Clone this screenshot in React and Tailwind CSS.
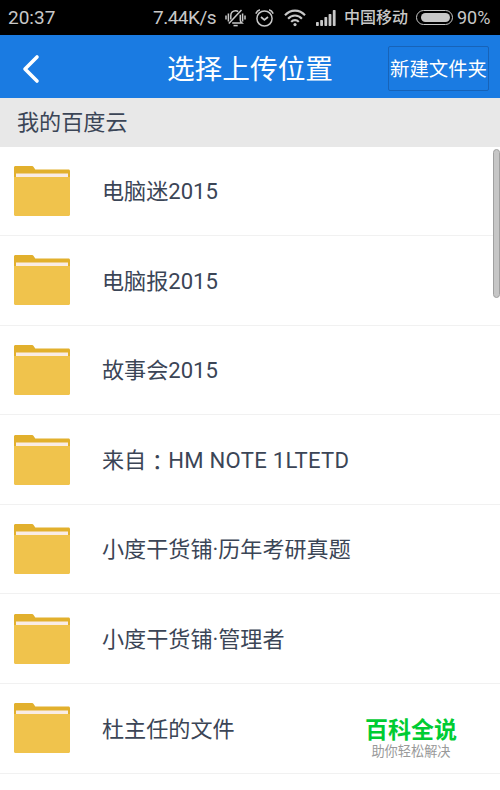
import { ChevronLeft } from 'lucide-react';

const folders = [
  '电脑迷2015',
  '电脑报2015',
  '故事会2015',
  '来自：HM NOTE 1LTETD',
  '小度干货铺·历年考研真题',
  '小度干货铺·管理者',
  '杜主任的文件',
];

function MutedBell() {
  return (
    <svg className="w-[21px] h-[18px] ml-[9px] shrink-0" viewBox="0 0 21 18" fill="none" stroke="#c8c8c8" strokeWidth="1.5">
      <path d="M1 6.5v4M3.4 4.5v8M17.6 4.5v8M20 6.5v4" />
      <path d="M5.8 10.5V6.6C5.8 3.8 7.8 1.7 10.5 1.7c1 0 2 .3 2.7.9M15.3 5.8v5.4c0 1.2.6 2 1.5 2.7H7.2" />
      <path d="M16.5 1 3.8 14.6" />
      <path d="M8.5 16.6h4.2" />
    </svg>
  );
}

function AlarmIcon() {
  return (
    <svg className="w-[19px] h-[18px] ml-[9px] shrink-0" viewBox="0 0 19 18" fill="none" stroke="#c8c8c8" strokeWidth="1.5">
      <circle cx="9.5" cy="9.5" r="7.6" />
      <path d="M.8 4.6C1.6 2.8 3 1.4 4.9.8M18.2 4.6C17.4 2.8 16 1.4 14.1.8" />
      <path d="m6 8 3.4 3L13 8" strokeWidth="1.7" />
    </svg>
  );
}

function WifiIcon() {
  return (
    <svg className="w-[22px] h-[18px] ml-[10px] shrink-0" viewBox="0 0 22 18" fill="none" stroke="#c8c8c8" strokeWidth="2.1">
      <path d="M1 6.3c5.6-6.3 14.4-6.3 20 0" />
      <path d="M4.1 9.7c3.8-4.3 10-4.3 13.8 0" />
      <path d="M7.2 12.9c2.1-2.4 5.5-2.4 7.6 0" />
      <circle cx="11" cy="15.6" r="1.6" fill="#c8c8c8" stroke="none" />
    </svg>
  );
}

function SignalIcon() {
  return (
    <svg className="w-[20px] h-[16px] ml-[10px] shrink-0" viewBox="0 0 20 16" fill="#c8c8c8">
      <rect x="0" y="12" width="2.8" height="4" rx=".7" />
      <rect x="4.2" y="10" width="2.8" height="6" rx=".7" />
      <rect x="8.4" y="7" width="2.8" height="9" rx=".7" />
      <rect x="12.6" y="4" width="2.8" height="12" rx=".7" />
      <rect x="16.8" y="0" width="2.8" height="16" rx=".7" />
    </svg>
  );
}

function StatusBar() {
  return (
    <div className="h-[35px] bg-black text-[#c8c8c8] flex items-center pl-2 text-[19px] leading-[35px] whitespace-nowrap">
      <span className="w-[145px] shrink-0">20:37</span>
      <span className="w-[63px] shrink-0 tracking-[-0.5px]">7.44K/s</span>
      <MutedBell />
      <AlarmIcon />
      <WifiIcon />
      <SignalIcon />
      <span className="ml-[8px] w-[64px] shrink-0 text-[16px] font-medium">中国移动</span>
      <div className="ml-[8px] w-[37px] h-[15px] shrink-0 rounded-full border-[1.5px] border-[#c8c8c8] p-[2px] pl-[4px]">
        <div className="h-full rounded-full bg-[#c8c8c8]" />
      </div>
      <span className="ml-[4px] text-[18px]">90%</span>
    </div>
  );
}

function Folder() {
  return (
    <svg className="w-[56px] h-[50px] shrink-0" viewBox="0 0 56 50">
      <path d="M1.5 0H18c.8 0 1.2.3 1.6.9l1.7 2.5H54.5c.9 0 1.5.6 1.5 1.5V15H0V1.5C0 .6.6 0 1.5 0Z" fill="#e2b02d" />
      <path d="M0 11h56v37.5c0 .9-.6 1.5-1.5 1.5h-53C.6 50 0 49.4 0 48.5Z" fill="#f0c34c" />
      <rect x="2" y="7.5" width="52" height="3.5" fill="#f9ece5" />
    </svg>
  );
}

// the full-width colon sits centred in its cell only in the TC face
function FolderName({ name }) {
  const [head, tail] = name.split('：');
  return (
    <span className="ml-[32px] pt-[0.6px] flex text-[22.1px] leading-[32px] whitespace-nowrap">
      <span>{head}</span>
      {tail && <span className="font-['Noto_Sans_CJK_TC',sans-serif]">：</span>}
      {tail && <span className="tracking-[0.25px]">{tail}</span>}
    </span>
  );
}

export default function App() {
  return (
    <div className="relative w-[500px] h-[790px] overflow-hidden bg-white text-[#3b4556] font-[Roboto,'Noto_Sans_CJK_SC',sans-serif]">
      <StatusBar />

      <header className="h-[63px] bg-[#1a7be2] text-white grid grid-cols-[120px_1fr_120px] items-center">
        <ChevronLeft className="ml-[7px] mt-[4px] w-[48px] h-[54px]" strokeWidth={1.8} />
        <h1 className="pt-[7px] text-[27.7px] leading-[40px] text-center whitespace-nowrap -mx-4">选择上传位置</h1>
        <button className="w-[101px] h-[45px] ml-[8px] mt-[3px] pt-[3px] rounded-[2px] border border-[#1763b8] text-[19.4px] leading-none whitespace-nowrap flex items-center justify-center">
          新建文件夹
        </button>
      </header>

      <div className="h-[48.5px] bg-[#e8e8e8] pl-[17px] flex items-center text-[22.1px] leading-[32px]">我的百度云</div>

      <ul>
        {folders.map((name) => (
          <li key={name} className="h-[89.6px] pl-[14px] flex items-center border-b border-[#f1f1f1]">
            <Folder />
            <FolderName name={name} />
          </li>
        ))}
      </ul>

      <div className="absolute right-0 top-[149px] w-[7px] h-[149px] rounded-full bg-[#c6c6c6] border border-[#a0a0a0]" />

      <div className="absolute left-[361px] top-[717px] w-[100px] text-center whitespace-nowrap">
        <div className="text-[23px] leading-[27px] font-bold text-[#0c3]">百科全说</div>
        <div className="text-[13.2px] leading-[16px] text-[#999]">助你轻松解决</div>
      </div>
    </div>
  );
}
